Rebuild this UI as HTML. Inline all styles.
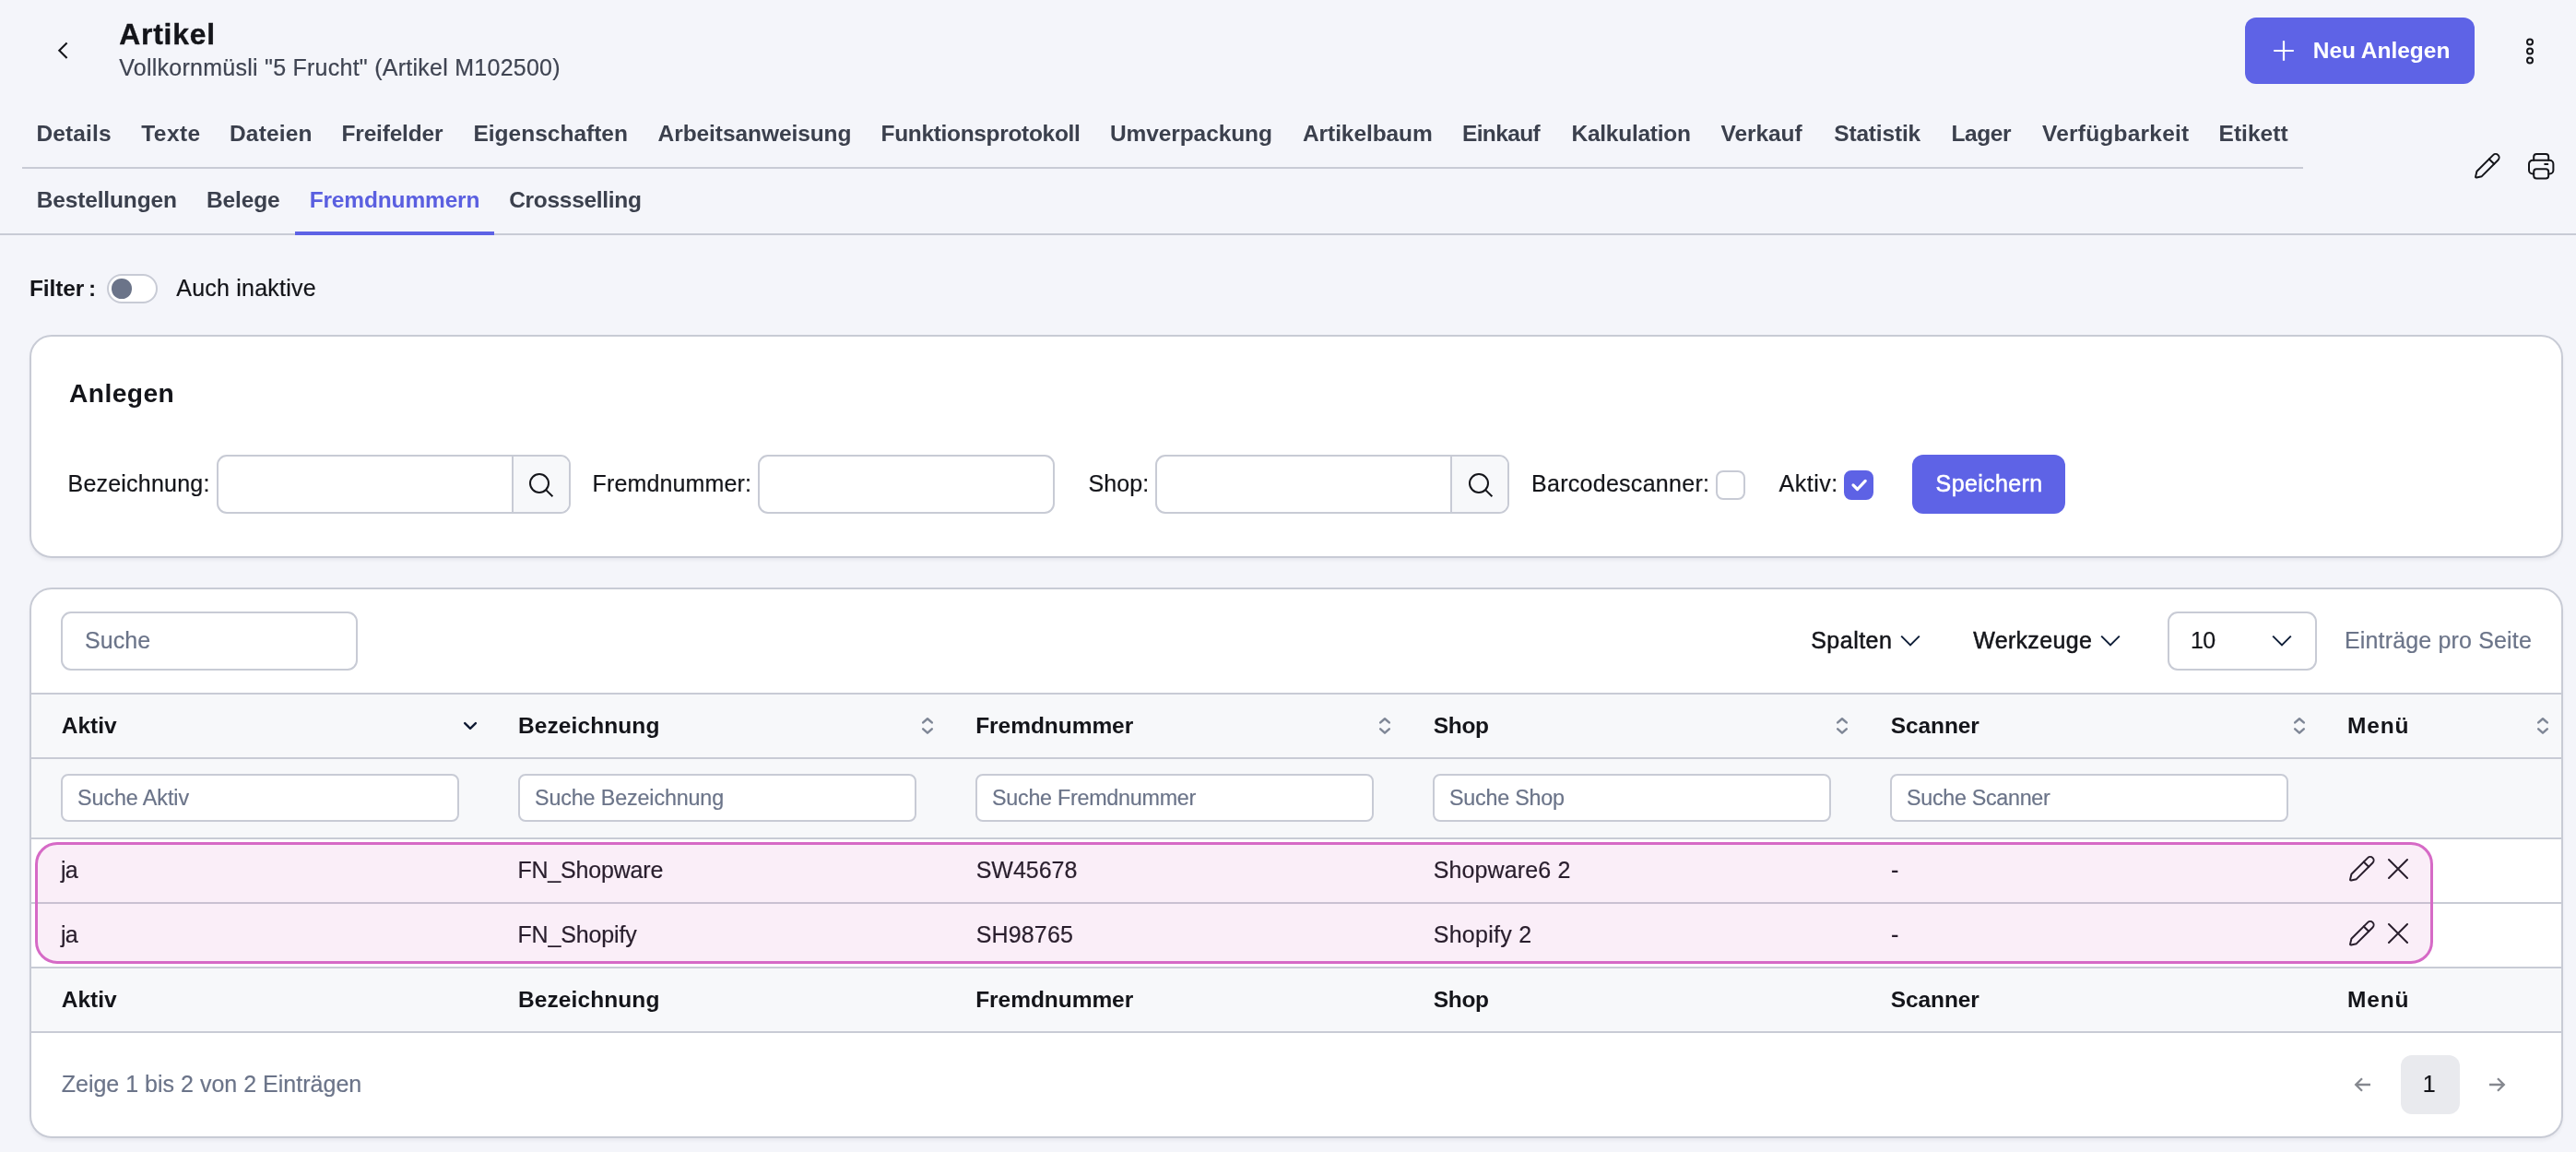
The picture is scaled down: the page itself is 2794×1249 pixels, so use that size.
<!DOCTYPE html>
<html lang="de">
<head>
<meta charset="utf-8">
<title>Artikel – Fremdnummern</title>
<style>
html,body{margin:0;padding:0}
body{width:2794px;height:1249px;background:#f4f5fa;font-family:"Liberation Sans",sans-serif;color:#14151a}
#page{position:relative;width:2794px;height:1249px;overflow:hidden;will-change:transform}
#page *{box-sizing:border-box}
.t{position:absolute;margin:0;line-height:1;white-space:nowrap;font-weight:400;text-decoration:none}
svg{position:absolute;overflow:visible}
.btn{position:absolute;border:0;padding:0;margin:0;background:#5e63e6;border-radius:12px;font:inherit;color:#fff;text-align:left}
.tabs1{position:absolute;border-bottom:2px solid #c8cbd5;height:83px}
.tabs2{position:absolute;border-bottom:2px solid #c8cbd5}
.activebar{position:absolute;background:#5d62e5}
.toggle{position:absolute;border:2px solid #c8cbd5;border-radius:16px;background:#fff}
.toggle i{position:absolute;left:3.2px;top:3px;width:21.3px;height:21.3px;border-radius:50%;background:#6b7489}
.card{position:absolute;background:#fff;border:2px solid #c8cbd5;border-radius:24px;overflow:hidden;box-shadow:0 3px 4px -1px rgba(30,35,60,.07)}
.card>div{position:absolute}
.inp{position:absolute;background:#fff;border:2px solid #c8cbd5;border-radius:11px}
.inp.sm{border-radius:8px}
.inp.grp{overflow:hidden}
.inp.grp b{position:absolute;top:0;bottom:0;right:0;border-left:2px solid #c8cbd5;background:#f7f8fa}
.chk{position:absolute;width:32px;height:32px;border:2px solid #c8cbd5;border-radius:8px;background:#fff}
.chk.on{background:#5d62e5;border-color:#5d62e5}
.chk.on svg{left:-2px !important;top:-2px !important}
.thead{background:#f7f8fa;border-top:2px solid #c8cbd5;border-bottom:2px solid #c8cbd5}
.tfilter{background:#f7f8fa;border-bottom:2px solid #c8cbd5}
.trow{background:#fff;border-bottom:2px solid #c8cbd5}
.tfoot{background:#f7f8fa;border-bottom:2px solid #c8cbd5}
.hl{position:absolute;border:3px solid #d66ac6;border-radius:24px;background:rgba(215,104,197,.115)}
.pg{position:absolute;background:#e9eaee;border-radius:12px}
h1.t{-webkit-text-stroke:.4px currentColor}
.r{-webkit-text-stroke:.2px currentColor}
.med{-webkit-text-stroke:.5px currentColor}
</style>
</head>
<body>
<div id="page">
<header>
<a class="back" aria-label="Zurück"><svg style="left:58px;top:42px" width="20" height="26" viewBox="0 0 20 26"><path d="M14.6 4.6 L6.3 12.85 L14.6 21.1" fill="none" stroke="#14151a" stroke-width="2.1"/></svg></a>
<h1 class="t" style="left:129.20px;top:22.00px;font-size:31.8px;letter-spacing:0.829px;font-weight:700;">Artikel</h1>
<p class="t r" style="left:129.20px;top:61.00px;font-size:25px;letter-spacing:0.256px;color:#3f4452;">Vollkornmüsli "5 Frucht" (Artikel M102500)</p>
<button class="btn" style="left:2435px;top:19px;width:249px;height:72px">
<svg style="left:31px;top:25px" width="22" height="22" viewBox="0 0 22 22"><path d="M11 0.2V21.8M0.2 11H21.8" stroke="#fff" stroke-width="2.2" fill="none"/></svg>
<span class="t onbtn" style="left:73.80px;top:24.00px;font-size:24.5px;letter-spacing:-0.027px;font-weight:700;color:#fff;">Neu Anlegen</span>
</button>
<svg class="dots" style="left:2738px;top:39.8px" width="12" height="32" viewBox="0 0 12 32"><g fill="none" stroke="#14151a" stroke-width="2"><circle cx="6" cy="5.4" r="3"/><circle cx="6" cy="15.4" r="3"/><circle cx="6" cy="25.4" r="3"/></g></svg>
</header>
<nav class="maintabs" aria-label="Artikel">
<div class="tabs1" style="left:24px;top:100px;width:2474px;height:83px"></div>
<a class="t tab" style="left:39.50px;top:133.00px;font-size:24.5px;letter-spacing:0.130px;font-weight:700;color:#3b404d;">Details</a>
<a class="t tab" style="left:153.30px;top:133.00px;font-size:24.5px;letter-spacing:0.411px;font-weight:700;color:#3b404d;">Texte</a>
<a class="t tab" style="left:249.00px;top:133.00px;font-size:24.5px;letter-spacing:0.177px;font-weight:700;color:#3b404d;">Dateien</a>
<a class="t tab" style="left:370.60px;top:133.00px;font-size:24.5px;letter-spacing:-0.202px;font-weight:700;color:#3b404d;">Freifelder</a>
<a class="t tab" style="left:513.40px;top:133.00px;font-size:24.5px;letter-spacing:0.009px;font-weight:700;color:#3b404d;">Eigenschaften</a>
<a class="t tab" style="left:713.60px;top:133.00px;font-size:24.5px;letter-spacing:-0.077px;font-weight:700;color:#3b404d;">Arbeitsanweisung</a>
<a class="t tab" style="left:955.50px;top:133.00px;font-size:24.5px;letter-spacing:-0.325px;font-weight:700;color:#3b404d;">Funktionsprotokoll</a>
<a class="t tab" style="left:1203.90px;top:133.00px;font-size:24.5px;letter-spacing:-0.085px;font-weight:700;color:#3b404d;">Umverpackung</a>
<a class="t tab" style="left:1413.00px;top:133.00px;font-size:24.5px;letter-spacing:-0.081px;font-weight:700;color:#3b404d;">Artikelbaum</a>
<a class="t tab" style="left:1586.00px;top:133.00px;font-size:24.5px;letter-spacing:-0.638px;font-weight:700;color:#3b404d;">Einkauf</a>
<a class="t tab" style="left:1704.50px;top:133.00px;font-size:24.5px;letter-spacing:-0.258px;font-weight:700;color:#3b404d;">Kalkulation</a>
<a class="t tab" style="left:1866.50px;top:133.00px;font-size:24.5px;letter-spacing:-0.061px;font-weight:700;color:#3b404d;">Verkauf</a>
<a class="t tab" style="left:1989.30px;top:133.00px;font-size:24.5px;letter-spacing:-0.185px;font-weight:700;color:#3b404d;">Statistik</a>
<a class="t tab" style="left:2116.50px;top:133.00px;font-size:24.5px;letter-spacing:-0.421px;font-weight:700;color:#3b404d;">Lager</a>
<a class="t tab" style="left:2215.00px;top:133.00px;font-size:24.5px;letter-spacing:0.215px;font-weight:700;color:#3b404d;">Verfügbarkeit</a>
<a class="t tab" style="left:2406.50px;top:133.00px;font-size:24.5px;letter-spacing:0.047px;font-weight:700;color:#3b404d;">Etikett</a>
</nav>
<div class="pageactions">
<svg style="left:2684px;top:165.5px" width="28" height="29" viewBox="0 0 28 29"><g fill="none" stroke="#14151a" stroke-width="2" stroke-linejoin="round" stroke-linecap="round" transform="translate(26.2 1.4) rotate(45)"><path d="M-3.8 4.8A3.8 3.8 0 0 1 3.8 4.8V29.8L0.8 34.7Q0 35.9 -0.8 34.7L-3.8 29.8Z"/><path d="M-3.8 10.9H3.8"/></g></svg>
<svg style="left:2742px;top:165.6px" width="28.4" height="28.4" viewBox="0 0 28.4 28.4"><g fill="none" stroke="#14151a" stroke-width="2" stroke-linecap="round"><path d="M6.2 7.8V4a3 3 0 0 1 3-3h10a3 3 0 0 1 3 3V7.8"/><path d="M6.2 22.5H5a4 4 0 0 1-4-4V11.8a4 4 0 0 1 4-4H23.4a4 4 0 0 1 4 4V18.5a4 4 0 0 1-4 4H22.2"/><rect x="6.2" y="17.2" width="16" height="10.2" rx="3"/><path d="M18.2 11.9H21.3"/></g></svg>
</div>
<nav class="subtabs" aria-label="Unterbereiche">
<div class="tabs2" style="left:0;top:184px;width:2794px;height:71px"></div>
<div class="activebar" style="left:320px;top:251px;width:216px;height:4px"></div>
<a class="t tab" style="left:39.80px;top:205.00px;font-size:24.5px;letter-spacing:-0.160px;font-weight:700;color:#3b404d;">Bestellungen</a>
<a class="t tab" style="left:224.00px;top:205.00px;font-size:24.5px;letter-spacing:-0.143px;font-weight:700;color:#3b404d;">Belege</a>
<a class="t tab" style="left:335.70px;top:205.00px;font-size:24.5px;letter-spacing:-0.158px;font-weight:700;color:#5a5fe0;">Fremdnummern</a>
<a class="t tab" style="left:552.20px;top:205.00px;font-size:24.5px;letter-spacing:-0.298px;font-weight:700;color:#3b404d;">Crossselling</a>
</nav>
<main>
<div class="filterbar">
<span class="t" style="left:32.00px;top:301.20px;font-size:24.5px;letter-spacing:-0.133px;font-weight:700;">Filter</span>
<span class="t" style="left:96.00px;top:301.20px;font-size:24.5px;font-weight:700;">:</span>
<div class="toggle" style="left:116.2px;top:297.4px;width:55.2px;height:31.2px"><i></i></div>
<label class="t r" style="left:191.30px;top:300.20px;font-size:25px;letter-spacing:0.217px;">Auch inaktive</label>
</div>
<section class="anlegen">
<div class="card" style="left:32px;top:363px;width:2748px;height:242px"></div>
<form>
<h2 class="t" style="left:75.00px;top:412.00px;font-size:28.2px;letter-spacing:0.421px;font-weight:700;">Anlegen</h2>
<label class="t r" style="left:73.50px;top:512.00px;font-size:25px;letter-spacing:0.213px;">Bezeichnung:</label>
<div class="inp grp" style="left:235px;top:493px;width:384px;height:64px"><b style="left:317.5px"></b></div>
<svg width="28" height="28" viewBox="0 0 28 28" style="left:573px;top:510.5px"><circle cx="12" cy="13" r="10" fill="none" stroke="#14151a" stroke-width="2"/><path d="M19.1 20.1L26.4 27.2" stroke="#14151a" stroke-width="2" fill="none"/></svg>
<label class="t r" style="left:642.60px;top:512.00px;font-size:25px;letter-spacing:0.135px;">Fremdnummer:</label>
<div class="inp" style="left:822px;top:493px;width:322px;height:64px"></div>
<label class="t r" style="left:1180.40px;top:512.00px;font-size:25px;letter-spacing:0.116px;">Shop:</label>
<div class="inp grp" style="left:1253px;top:493px;width:384px;height:64px"><b style="left:317.5px"></b></div>
<svg width="28" height="28" viewBox="0 0 28 28" style="left:1591.5px;top:510.5px"><circle cx="12" cy="13" r="10" fill="none" stroke="#14151a" stroke-width="2"/><path d="M19.1 20.1L26.4 27.2" stroke="#14151a" stroke-width="2" fill="none"/></svg>
<label class="t r" style="left:1661.00px;top:512.00px;font-size:25px;letter-spacing:0.282px;">Barcodescanner:</label>
<div class="chk" style="left:1861px;top:510px"></div>
<label class="t r" style="left:1929.60px;top:512.00px;font-size:25px;letter-spacing:0.495px;">Aktiv:</label>
<div class="chk on" style="left:2000px;top:510px"><svg width="32" height="32" viewBox="0 0 32 32" style="left:0;top:0"><path d="M10 15.9L14.6 20.5L23.2 11.4" fill="none" stroke="#fff" stroke-width="3.2" stroke-linecap="round" stroke-linejoin="round"/></svg></div>
<button class="btn" style="left:2074px;top:493px;width:166px;height:64px"><span class="t r onbtn med" style="left:25.60px;top:19.00px;font-size:25px;letter-spacing:0.366px;color:#fff;">Speichern</span></button>
</form>
</section>
<section class="liste">
<div class="card" style="left:32px;top:637px;width:2748px;height:597px">
<div class="thead" style="left:0;top:112px;width:2744px;height:72px"></div>
<div class="tfilter" style="left:0;top:184px;width:2744px;height:87px"></div>
<div class="trow" style="left:0;top:271px;width:2744px;height:70px"></div>
<div class="trow" style="left:0;top:341px;width:2744px;height:70px"></div>
<div class="tfoot" style="left:0;top:411px;width:2744px;height:70px"></div>
</div>
<div class="inp" style="left:66px;top:663px;width:322px;height:64px"><span class="t r ph" style="left:24.00px;top:17.00px;font-size:25px;letter-spacing:0.079px;color:#6b7489;">Suche</span></div>
<span class="t r med" style="left:1964.20px;top:682.00px;font-size:25px;letter-spacing:0.486px;">Spalten</span>
<svg width="24" height="16" viewBox="0 0 24 16" style="left:2059.5px;top:687.4px"><path d="M2.2 2.6L12 12.4L21.8 2.6" fill="none" stroke="#0f1e38" stroke-width="2"/></svg>
<span class="t r med" style="left:2140.20px;top:682.00px;font-size:25px;letter-spacing:0.327px;">Werkzeuge</span>
<svg width="24" height="16" viewBox="0 0 24 16" style="left:2277.2px;top:687.4px"><path d="M2.2 2.6L12 12.4L21.8 2.6" fill="none" stroke="#0f1e38" stroke-width="2"/></svg>
<div class="inp sel" style="left:2351px;top:663px;width:162px;height:64px"><span class="t r" style="left:23.00px;top:17.00px;font-size:25px;letter-spacing:-0.700px;">10</span></div>
<svg width="24" height="16" viewBox="0 0 24 16" style="left:2463.4px;top:687.4px"><path d="M2.2 2.6L12 12.4L21.8 2.6" fill="none" stroke="#0f1e38" stroke-width="2"/></svg>
<span class="t r" style="left:2543.00px;top:682.00px;font-size:25px;letter-spacing:0.158px;color:#6b7489;">Einträge pro Seite</span>
<span class="t th" style="left:66.70px;top:775.00px;font-size:24.5px;letter-spacing:0.029px;font-weight:700;">Aktiv</span>
<span class="t th" style="left:66.70px;top:1072.00px;font-size:24.5px;letter-spacing:0.029px;font-weight:700;">Aktiv</span>
<span class="t th" style="left:562.00px;top:775.00px;font-size:24.5px;letter-spacing:0.091px;font-weight:700;">Bezeichnung</span>
<span class="t th" style="left:562.00px;top:1072.00px;font-size:24.5px;letter-spacing:0.091px;font-weight:700;">Bezeichnung</span>
<span class="t th" style="left:1058.20px;top:775.00px;font-size:24.5px;letter-spacing:-0.050px;font-weight:700;">Fremdnummer</span>
<span class="t th" style="left:1058.20px;top:1072.00px;font-size:24.5px;letter-spacing:-0.050px;font-weight:700;">Fremdnummer</span>
<span class="t th" style="left:1554.80px;top:775.00px;font-size:24.5px;letter-spacing:-0.357px;font-weight:700;">Shop</span>
<span class="t th" style="left:1554.80px;top:1072.00px;font-size:24.5px;letter-spacing:-0.357px;font-weight:700;">Shop</span>
<span class="t th" style="left:2050.80px;top:775.00px;font-size:24.5px;letter-spacing:-0.108px;font-weight:700;">Scanner</span>
<span class="t th" style="left:2050.80px;top:1072.00px;font-size:24.5px;letter-spacing:-0.108px;font-weight:700;">Scanner</span>
<span class="t th" style="left:2546.00px;top:775.00px;font-size:24.5px;letter-spacing:0.800px;font-weight:700;">Menü</span>
<span class="t th" style="left:2546.00px;top:1072.00px;font-size:24.5px;letter-spacing:0.800px;font-weight:700;">Menü</span>
<svg width="18" height="12" viewBox="0 0 18 12" style="left:501px;top:782px"><path d="M3.2 2.1L9.05 7.8L14.9 2.1" fill="none" stroke="#101b33" stroke-width="2.4" stroke-linecap="round" stroke-linejoin="round"/></svg>
<svg width="16" height="22" viewBox="0 0 16 22" style="left:998px;top:776px"><path d="M3.2 7.4L8 3.2L12.8 7.4M3.2 14.4L8 18.6L12.8 14.4" fill="none" stroke="#7f8796" stroke-width="2.5" stroke-linecap="round" stroke-linejoin="round"/></svg>
<svg width="16" height="22" viewBox="0 0 16 22" style="left:1494px;top:776px"><path d="M3.2 7.4L8 3.2L12.8 7.4M3.2 14.4L8 18.6L12.8 14.4" fill="none" stroke="#7f8796" stroke-width="2.5" stroke-linecap="round" stroke-linejoin="round"/></svg>
<svg width="16" height="22" viewBox="0 0 16 22" style="left:1990px;top:776px"><path d="M3.2 7.4L8 3.2L12.8 7.4M3.2 14.4L8 18.6L12.8 14.4" fill="none" stroke="#7f8796" stroke-width="2.5" stroke-linecap="round" stroke-linejoin="round"/></svg>
<svg width="16" height="22" viewBox="0 0 16 22" style="left:2486px;top:776px"><path d="M3.2 7.4L8 3.2L12.8 7.4M3.2 14.4L8 18.6L12.8 14.4" fill="none" stroke="#7f8796" stroke-width="2.5" stroke-linecap="round" stroke-linejoin="round"/></svg>
<svg width="16" height="22" viewBox="0 0 16 22" style="left:2750px;top:776px"><path d="M3.2 7.4L8 3.2L12.8 7.4M3.2 14.4L8 18.6L12.8 14.4" fill="none" stroke="#7f8796" stroke-width="2.5" stroke-linecap="round" stroke-linejoin="round"/></svg>
<div class="inp sm" style="left:66px;top:839.4px;width:432px;height:51.5px"><span class="t r ph" style="left:16.00px;top:12.60px;font-size:23.3px;letter-spacing:-0.067px;color:#6b7489;">Suche Aktiv</span></div>
<div class="inp sm" style="left:562px;top:839.4px;width:432px;height:51.5px"><span class="t r ph" style="left:16.00px;top:12.60px;font-size:23.3px;letter-spacing:-0.130px;color:#6b7489;">Suche Bezeichnung</span></div>
<div class="inp sm" style="left:1058px;top:839.4px;width:432px;height:51.5px"><span class="t r ph" style="left:16.00px;top:12.60px;font-size:23.3px;letter-spacing:-0.251px;color:#6b7489;">Suche Fremdnummer</span></div>
<div class="inp sm" style="left:1554px;top:839.4px;width:432px;height:51.5px"><span class="t r ph" style="left:16.00px;top:12.60px;font-size:23.3px;letter-spacing:-0.220px;color:#6b7489;">Suche Shop</span></div>
<div class="inp sm" style="left:2050px;top:839.4px;width:432px;height:51.5px"><span class="t r ph" style="left:16.00px;top:12.60px;font-size:23.3px;letter-spacing:-0.295px;color:#6b7489;">Suche Scanner</span></div>
<span class="t r td" style="left:66.02px;top:930.60px;font-size:25px;letter-spacing:-0.700px;">ja</span>
<span class="t r td" style="left:561.40px;top:930.60px;font-size:25px;letter-spacing:-0.180px;">FN_Shopware</span>
<span class="t r td" style="left:1058.70px;top:930.60px;font-size:25px;letter-spacing:-0.014px;">SW45678</span>
<span class="t r td" style="left:1554.70px;top:930.60px;font-size:25px;letter-spacing:0.128px;">Shopware6 2</span>
<span class="t r td" style="left:2051.10px;top:930.60px;font-size:25px;">-</span>
<span class="t r td" style="left:66.02px;top:1000.60px;font-size:25px;letter-spacing:-0.700px;">ja</span>
<span class="t r td" style="left:561.40px;top:1000.60px;font-size:25px;letter-spacing:-0.135px;">FN_Shopify</span>
<span class="t r td" style="left:1058.70px;top:1000.60px;font-size:25px;letter-spacing:0.159px;">SH98765</span>
<span class="t r td" style="left:1554.70px;top:1000.60px;font-size:25px;letter-spacing:0.283px;">Shopify 2</span>
<span class="t r td" style="left:2051.10px;top:1000.60px;font-size:25px;">-</span>
<svg style="left:2548px;top:927.7px" width="28" height="29" viewBox="0 0 28 29"><g fill="none" stroke="#14151a" stroke-width="2" stroke-linejoin="round" stroke-linecap="round" transform="translate(26.2 1.4) rotate(45)"><path d="M-3.8 4.8A3.8 3.8 0 0 1 3.8 4.8V29.8L0.8 34.7Q0 35.9 -0.8 34.7L-3.8 29.8Z"/><path d="M-3.8 10.9H3.8"/></g></svg>
<svg width="24" height="24" viewBox="0 0 24 24" style="left:2589px;top:930px"><path d="M2 2L22 22M22 2L2 22" fill="none" stroke="#14151a" stroke-width="2" stroke-linecap="round"/></svg>
<svg style="left:2548px;top:997.7px" width="28" height="29" viewBox="0 0 28 29"><g fill="none" stroke="#14151a" stroke-width="2" stroke-linejoin="round" stroke-linecap="round" transform="translate(26.2 1.4) rotate(45)"><path d="M-3.8 4.8A3.8 3.8 0 0 1 3.8 4.8V29.8L0.8 34.7Q0 35.9 -0.8 34.7L-3.8 29.8Z"/><path d="M-3.8 10.9H3.8"/></g></svg>
<svg width="24" height="24" viewBox="0 0 24 24" style="left:2589px;top:1000px"><path d="M2 2L22 22M22 2L2 22" fill="none" stroke="#14151a" stroke-width="2" stroke-linecap="round"/></svg>
<div class="hl" style="left:38.3px;top:912.7px;width:2601px;height:132px"></div>
<span class="t r" style="left:66.70px;top:1163.00px;font-size:25px;letter-spacing:0.011px;color:#6b7489;">Zeige 1 bis 2 von 2 Einträgen</span>
<svg width="20" height="18" viewBox="0 0 20 18" style="left:2552px;top:1167px"><path d="M19 9H3.2M10 2.2L3.2 9L10 15.8" fill="none" stroke="#85888f" stroke-width="2.3"/></svg>
<a class="pg" style="left:2604px;top:1144px;width:64px;height:64px"><span class="t r" style="left:23.70px;top:19.00px;font-size:25px;">1</span></a>
<svg width="20" height="18" viewBox="0 0 20 18" style="left:2699px;top:1167px"><path d="M1 9H16.8M10 2.2L16.8 9L10 15.8" fill="none" stroke="#85888f" stroke-width="2.3"/></svg>
</section>
</main>
</div>
</body>
</html>
